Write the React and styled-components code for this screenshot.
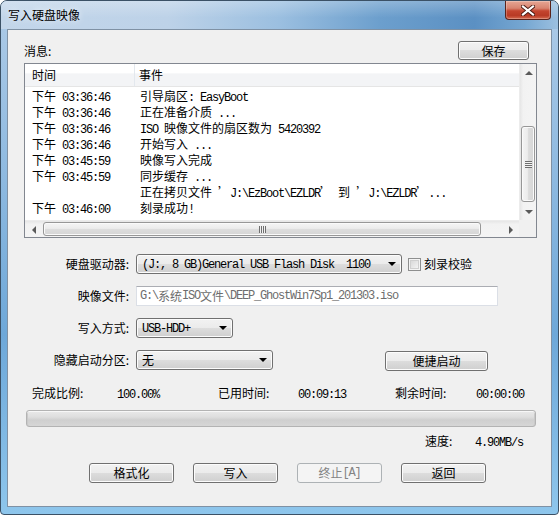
import React from "react";
import styled, { createGlobalStyle } from "styled-components";

const GlobalStyle = createGlobalStyle`
  html, body {
    margin: 0;
    padding: 0;
    background: #ffffff;
  }
  body {
    font-family: "Noto Sans CJK SC", "Noto Sans", sans-serif;
    font-size: 12px;
    color: #000;
  }
  * { box-sizing: border-box; }
`;

// --- window frame ---
const Window = styled.div`
  width: 559px;
  height: 515px;
  border: 1px solid #3b5166;
  border-radius: 7px 7px 4px 4px;
  background: linear-gradient(180deg, #aecbe7 0%, #8db9e0 35%, #6ea8d9 65%, #8ec6ec 100%);
  display: flex;
  flex-direction: column;
  overflow: hidden;
`;

const TitleBar = styled.div`
  height: 28px;
  flex: none;
  display: flex;
  justify-content: space-between;
  align-items: flex-start;
  padding: 0 7px;
  background:
    linear-gradient(180deg, rgba(255,255,255,0.25) 0%, rgba(255,255,255,0) 60%),
    linear-gradient(90deg, #c3d6ea 0%, #bdd2e8 30%, #9bbfe0 50%, #6c9fcd 68%, #5b90c3 85%, #76a7d2 94%, #9cc0e0 100%);
`;

const Title = styled.div`
  height: 28px;
  line-height: 28px;
  font-size: 12px;
  color: #000;
  text-shadow: 0 0 6px rgba(255,255,255,0.9);
`;

const CloseButton = styled.div`
  width: 46px;
  height: 19px;
  border: 1px solid #5a231b;
  border-top: none;
  border-radius: 0 0 4px 4px;
  background: linear-gradient(180deg, #e6a694 0%, #d88470 40%, #c4452f 55%, #b83a25 80%, #d56a4f 100%);
  box-shadow: inset 0 0 0 1px rgba(255,255,255,0.25);
  display: flex;
  align-items: center;
  justify-content: center;
`;

const Client = styled.div`
  margin-left: 6px;
  width: 545px;
  height: 478px;
  border: 1px solid #7f91a4;
  background: #f0f0f0;
  display: flex;
  flex-direction: column;
`;

// --- common controls ---
const Lat = styled.span`
  font-family: "Liberation Mono", monospace;
  font-size: 12px;
  letter-spacing: -1.2px;
  white-space: pre;
`;

const CJK_RE = /([\u2018\u2019\u3000-\u303f\u4e00-\u9fff\uff00-\uffef]+)/;
const CJK_TEST = /^[\u2018\u2019\u3000-\u303f\u4e00-\u9fff\uff00-\uffef]/;
const mixed = (text) =>
  text
    .split(CJK_RE)
    .filter(Boolean)
    .map((part, i) =>
      CJK_TEST.test(part) ? <span key={i}>{part}</span> : <Lat key={i}>{part}</Lat>
    );

const Button = styled.div`
  width: ${(p) => p.$w}px;
  height: ${(p) => p.$h || 20}px;
  flex: none;
  border: 1px solid ${(p) => (p.$disabled ? "#adb2b5" : "#707070")};
  border-radius: 3px;
  background: ${(p) =>
    p.$disabled
      ? "#f4f4f4"
      : "linear-gradient(180deg, #f2f2f2 0%, #ebebeb 50%, #dddddd 50%, #cfcfcf 100%)"};
  box-shadow: inset 0 0 0 1px ${(p) => (p.$disabled ? "#f4f4f4" : "#fcfcfc")};
  color: ${(p) => (p.$disabled ? "#838383" : "#000")};
  display: flex;
  align-items: center;
  justify-content: center;
  font-size: 12px;
  line-height: 16px;
`;

const Combo = styled.div`
  width: ${(p) => p.$w}px;
  height: 20px;
  flex: none;
  border: 1px solid #707070;
  border-radius: 3px;
  background: linear-gradient(180deg, #f2f2f2 0%, #ebebeb 50%, #dddddd 50%, #cfcfcf 100%);
  box-shadow: inset 0 0 0 1px #fcfcfc;
  display: flex;
  align-items: center;
  justify-content: space-between;
  padding: 0 5px 0 5px;
  line-height: 16px;
  overflow: hidden;
`;

const ComboArrow = styled.span`
  width: 0;
  height: 0;
  flex: none;
  border-left: 4px solid transparent;
  border-right: 4px solid transparent;
  border-top: 4px solid #000;
`;

const TextBox = styled.div`
  width: ${(p) => p.$w}px;
  height: 20px;
  border: 1px solid #dbdfe6;
  border-top-color: #abadb3;
  background: #fff;
  color: #6d6d6d;
  display: flex;
  align-items: center;
  padding-left: 3px;
  line-height: 16px;
  white-space: nowrap;
`;

const CheckBox = styled.span`
  width: 13px;
  height: 13px;
  flex: none;
  border: 1px solid #8e8f8f;
  background: linear-gradient(135deg, #d2d2d2 0%, #eaeaea 60%, #fbfbfb 100%);
  box-shadow: inset 0 0 0 1px #f4f4f4, inset 0 0 0 2px #cfcfcf;
`;

// --- message list ---
const MsgHeader = styled.div`
  margin-top: 11px;
  height: 19px;
  padding: 0 22px 0 16px;
  display: flex;
  justify-content: space-between;
  align-items: center;
`;

const ListBox = styled.div`
  margin: 3px 0 0 16px;
  width: 513px;
  height: 175px;
  border: 1px solid #828790;
  background: #fff;
  display: grid;
  grid-template-columns: 1fr 17px;
  grid-template-rows: 1fr 17px;
`;

const ListView = styled.div`
  overflow: hidden;
`;

const HeaderRow = styled.div`
  height: 23px;
  display: flex;
  border-bottom: 1px solid #e5e5e5;
  background: linear-gradient(180deg, #ffffff 0%, #ffffff 40%, #f3f4f6 45%, #f3f4f6 100%);
`;

const HeaderCell = styled.div`
  width: ${(p) => (p.$w ? `${p.$w}px` : "auto")};
  flex: ${(p) => (p.$w ? "none" : "1")};
  padding-left: ${(p) => p.$pad}px;
  border-right: ${(p) => (p.$w ? "1px solid #e3e8ee" : "none")};
  line-height: 22px;
`;

const Rows = styled.div`
  padding-top: 1px;
`;

const Row = styled.div`
  height: 16px;
  display: flex;
  line-height: 16px;
  white-space: nowrap;
`;

const Cell = styled.div`
  width: ${(p) => (p.$w ? `${p.$w}px` : "auto")};
  flex: ${(p) => (p.$w ? "none" : "1")};
  padding-left: ${(p) => p.$pad}px;
`;

const VScroll = styled.div`
  display: flex;
  flex-direction: column;
  background: linear-gradient(90deg, #e6e6e6 0%, #f2f2f2 20%, #f4f4f4 100%);
  border-left: 1px solid #ececec;
`;

const HScroll = styled.div`
  display: flex;
  background: linear-gradient(180deg, #e6e6e6 0%, #f2f2f2 20%, #f4f4f4 100%);
  border-top: 1px solid #ececec;
`;

const Corner = styled.div`
  background: #f0f0f0;
`;

const ArrowBox = styled.div`
  width: 17px;
  height: 17px;
  flex: none;
  display: flex;
  align-items: center;
  justify-content: center;
`;

const Tri = styled.span`
  width: 0;
  height: 0;
  ${(p) =>
    p.$dir === "up" &&
    "border-left:4px solid transparent;border-right:4px solid transparent;border-bottom:4px solid #5a5a5a;"}
  ${(p) =>
    p.$dir === "down" &&
    "border-left:4px solid transparent;border-right:4px solid transparent;border-top:4px solid #5a5a5a;"}
  ${(p) =>
    p.$dir === "left" &&
    "border-top:4px solid transparent;border-bottom:4px solid transparent;border-right:4px solid #5a5a5a;"}
  ${(p) =>
    p.$dir === "right" &&
    "border-top:4px solid transparent;border-bottom:4px solid transparent;border-left:4px solid #5a5a5a;"}
`;

const Track = styled.div`
  flex: 1;
  display: flex;
  flex-direction: ${(p) => (p.$vertical ? "column" : "row")};
  justify-content: ${(p) => (p.$vertical ? "flex-end" : "flex-start")};
  padding: ${(p) => (p.$vertical ? "0 1px 1px 1px" : "1px 0 1px 1px")};
`;

const Thumb = styled.div`
  border: 1px solid #979797;
  border-radius: 3px;
  display: flex;
  align-items: center;
  justify-content: center;
  background: ${(p) =>
    p.$vertical
      ? "linear-gradient(90deg, #f5f5f5 0%, #ececec 45%, #dcdcdc 55%, #d6d6d6 100%)"
      : "linear-gradient(180deg, #f5f5f5 0%, #ececec 45%, #dcdcdc 55%, #d6d6d6 100%)"};
  box-shadow: inset 0 0 0 1px #fafafa;
`;

const Grip = styled.span`
  width: 7px;
  height: 7px;
  background: ${(p) =>
    p.$vertical
      ? "repeating-linear-gradient(180deg, #6f6f6f 0 1px, #f2f2f2 1px 2px)"
      : "repeating-linear-gradient(90deg, #6f6f6f 0 1px, #f2f2f2 1px 2px)"};
`;

// --- form ---
const Form = styled.div`
  margin-top: 16px;
  display: grid;
  grid-template-columns: 122px 1fr;
  grid-auto-rows: 20px;
  column-gap: 6px;
  row-gap: 12px;
`;

const Label = styled.div`
  text-align: right;
  line-height: 20px;
  padding-right: 1px;
`;

const Field = styled.div`
  display: flex;
  align-items: ${(p) => p.$align || "center"};
`;

const CheckLabel = styled.label`
  display: flex;
  align-items: center;
  gap: 3px;
  margin-left: 6px;
  line-height: 16px;
`;

const Stats = styled.div`
  margin-top: 16px;
  height: 14px;
  line-height: 14px;
  padding-left: 24px;
  display: grid;
  grid-template-columns: 85px 101px 80px 97px 81px auto;
  white-space: nowrap;
`;

const Progress = styled.div`
  margin: 10px 0 0 18px;
  width: 510px;
  height: 17px;
  border: 1px solid #b3b3b3;
  border-radius: 3px;
  background: linear-gradient(180deg, #e9e9e9 0%, #dedede 40%, #cfcfcf 60%, #d6d6d6 100%);
  box-shadow: inset 0 1px 0 #f7f7f7, inset 1px 0 0 #c9c9c9, inset -1px 0 0 #c9c9c9;
`;

const SpeedRow = styled.div`
  margin-top: 7px;
  height: 14px;
  line-height: 14px;
  padding-left: 417px;
  display: grid;
  grid-template-columns: 50px auto;
  white-space: nowrap;
`;

const ButtonRow = styled.div`
  margin-top: 15px;
  padding-left: 81px;
  display: flex;
  gap: 19px;
`;

const events = [
  ["下午 03:36:46", "引导扇区: EasyBoot"],
  ["下午 03:36:46", "正在准备介质 ..."],
  ["下午 03:36:46", "ISO 映像文件的扇区数为 5420392"],
  ["下午 03:36:46", "开始写入 ..."],
  ["下午 03:45:59", "映像写入完成"],
  ["下午 03:45:59", "同步缓存 ..."],
  ["", "正在拷贝文件 ’J:\\EzBoot\\EZLDR’ 到 ’J:\\EZLDR’..."],
  ["下午 03:46:00", "刻录成功!"],
];

const App = () => {
  return (
    <>
      <GlobalStyle />
      <Window>
        <TitleBar>
          <Title>写入硬盘映像</Title>
          <CloseButton>
            <svg width="14" height="11" viewBox="0 0 14 11">
              <path d="M2 1.5 L12 9.5 M12 1.5 L2 9.5" stroke="#4a1a12" strokeWidth="4" strokeLinecap="square" />
              <path d="M2 1.5 L12 9.5 M12 1.5 L2 9.5" stroke="#ffffff" strokeWidth="2.2" strokeLinecap="square" />
            </svg>
          </CloseButton>
        </TitleBar>

        <Client>
          <MsgHeader>
            <span>消息:</span>
            <Button $w={71} $h={19}>保存</Button>
          </MsgHeader>

          <ListBox>
            <ListView>
              <HeaderRow>
                <HeaderCell $w={110} $pad={7}>时间</HeaderCell>
                <HeaderCell $pad={4}>事件</HeaderCell>
              </HeaderRow>
              <Rows>
                {events.map(([time, text], i) => (
                  <Row key={i}>
                    <Cell $w={110} $pad={7}>{mixed(time)}</Cell>
                    <Cell $pad={5}>{mixed(text)}</Cell>
                  </Row>
                ))}
              </Rows>
            </ListView>
            <VScroll>
              <ArrowBox><Tri $dir="up" /></ArrowBox>
              <Track $vertical>
                <Thumb $vertical style={{ height: 76 }}>
                  <Grip $vertical />
                </Thumb>
              </Track>
              <ArrowBox><Tri $dir="down" /></ArrowBox>
            </VScroll>
            <HScroll>
              <ArrowBox><Tri $dir="left" /></ArrowBox>
              <Track>
                <Thumb style={{ width: 438 }}>
                  <Grip />
                </Thumb>
              </Track>
              <ArrowBox><Tri $dir="right" /></ArrowBox>
            </HScroll>
            <Corner />
          </ListBox>

          <Form>
            <Label>硬盘驱动器:</Label>
            <Field>
              <Combo $w={266}>
                <span>{mixed("(J:, 8 GB)General USB Flash Disk  1100")}</span>
                <ComboArrow />
              </Combo>
              <CheckLabel>
                <CheckBox />
                刻录校验
              </CheckLabel>
            </Field>

            <Label>映像文件:</Label>
            <Field>
              <TextBox $w={362}>{mixed("G:\\系统ISO文件\\DEEP_GhostWin7Sp1_201303.iso")}</TextBox>
            </Field>

            <Label>写入方式:</Label>
            <Field>
              <Combo $w={97}>
                <span>{mixed("USB-HDD+")}</span>
                <ComboArrow />
              </Combo>
            </Field>

            <Label>隐藏启动分区:</Label>
            <Field $align="flex-start">
              <Combo $w={137}>
                <span>无</span>
                <ComboArrow />
              </Combo>
              <Button $w={103} style={{ marginLeft: 112, marginTop: 1 }}>便捷启动</Button>
            </Field>
          </Form>

          <Stats>
            <span>完成比例:</span>
            <span>{mixed("100.00%")}</span>
            <span>已用时间:</span>
            <span>{mixed("00:09:13")}</span>
            <span>剩余时间:</span>
            <span>{mixed("00:00:00")}</span>
          </Stats>

          <Progress />

          <SpeedRow>
            <span>速度:</span>
            <span>{mixed("4.90MB/s")}</span>
          </SpeedRow>

          <ButtonRow>
            <Button $w={85}>格式化</Button>
            <Button $w={85}>写入</Button>
            <Button $w={85} $disabled>{mixed("终止[A]")}</Button>
            <Button $w={85}>返回</Button>
          </ButtonRow>
        </Client>
      </Window>
    </>
  );
};

export default App;
